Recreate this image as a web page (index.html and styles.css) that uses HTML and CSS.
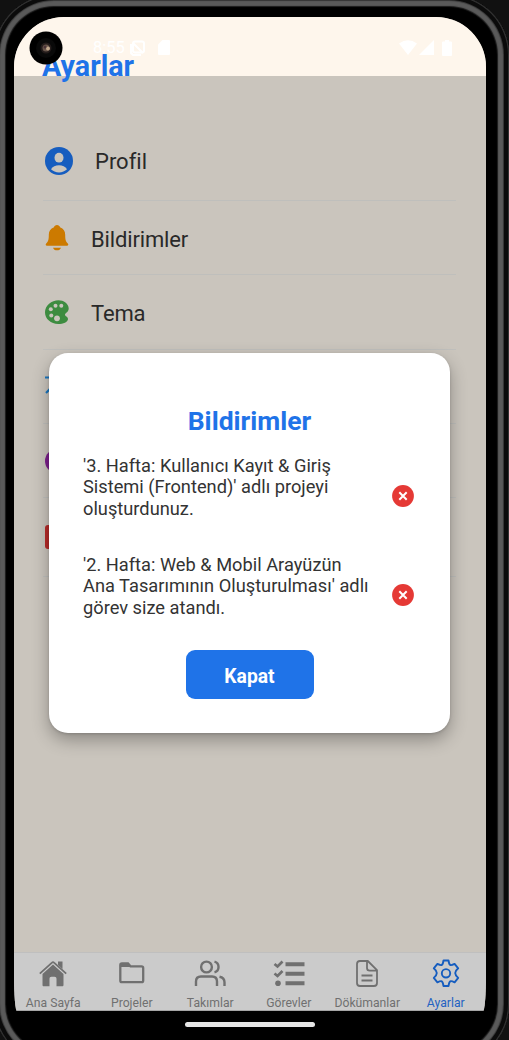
FILE: index.html
```
<!DOCTYPE html>
<html lang="tr">
<head>
<meta charset="utf-8">
<title>Ayarlar</title>
<link rel="stylesheet" href="styles.css">
</head>
<body>
<div class="device">
  <div class="bezel">
    <main class="screen">
      <header class="status">
        <div class="status-left">
          <span class="clock">8:55</span>
          <svg width="16" height="16" viewBox="0 0 16 16" fill="none" stroke="currentColor" stroke-width="2"><rect x="4" y="1.500" width="11" height="11" rx="2"/><path d="M2 4v9l2 2h8M4 3l10 10"/></svg>
          <svg class="sd" width="12" height="15" viewBox="0 0 12 15" fill="currentColor"><path d="M4.500 0H11a1 1 0 0 1 1 1v13a1 1 0 0 1-1 1H1a1 1 0 0 1-1-1V4.500z"/></svg>
        </div>
        <div class="status-right">
          <svg width="18" height="15" viewBox="0 0 18 15" fill="currentColor"><path d="M0 3.500Q9-3 18 3.500L9 15z"/></svg>
          <svg width="15" height="15" viewBox="0 0 15 15" fill="currentColor"><path d="M15 0v15H0z"/></svg>
          <svg class="battery" width="10" height="16" viewBox="0 0 10 16" fill="currentColor"><path d="M3 0h4v1.500h2a1 1 0 0 1 1 1V15a1 1 0 0 1-1 1H1a1 1 0 0 1-1-1V2.500a1 1 0 0 1 1-1h2z"/></svg>
        </div>
      </header>
      <h1 class="title">Ayarlar</h1>
      <ul class="settings">
        <li class="row row-profile">
          <svg width="28" height="28" viewBox="0 0 28 28"><circle cx="14" cy="14" r="14" fill="#165dbf"/><ellipse cx="14" cy="10.700" rx="4.500" ry="4.900" fill="#cac5bd"/><path d="M6 22.200c1.500-2.500 4.600-4 8-4s6.500 1.500 8 4c-2 2-4.900 3.200-8 3.200s-6-1.200-8-3.200z" fill="#cac5bd"/></svg>
          <span class="row-text">Profil</span>
        </li>
        <li class="row">
          <svg width="24" height="26" viewBox="0 0 24 26" fill="#cc7a00"><path d="M12 0c1.600 0 2.700 1 3 2.200 3.600 1.400 5.200 4 5.200 7.600 0 5 .6 6.800 2.600 8.600.9.900.6 2.300-.8 2.300H2c-1.400 0-1.700-1.400-.8-2.300 2-1.800 2.600-3.600 2.600-8.600 0-3.600 1.600-6.200 5.200-7.600C9.300 1 10.400 0 12 0zM8 22.700h8c-.5 1.600-2 2.600-4 2.600s-3.500-1-4-2.600z"/></svg>
          <span class="row-text">Bildirimler</span>
        </li>
        <li class="row">
          <svg width="24" height="24" viewBox="0 0 24 24"><path fill="#3d8c40" d="M13.500.2C6.500.2 0 5.500 0 12.300 0 19 6 24 13.200 24c5 0 9.800-2 9.800-5 0-2.500-3-2.500-3-4.500 0-1.500 3.700-2.200 3.700-6C23.700 3.600 18.500.2 13.500.2z"/><g fill="#cac5bd"><circle cx="10.500" cy="5.700" r="2"/><circle cx="16.300" cy="5.700" r="2"/><circle cx="5.800" cy="9.300" r="2"/><circle cx="6.300" cy="15.400" r="2"/><circle cx="12" cy="18.300" r="2.900"/></g></svg>
          <span class="row-text">Tema</span>
        </li>
        <li class="row">
          <svg width="24" height="24" viewBox="0 0 24 24" fill="none" stroke="#1a78c2" stroke-width="2.200"><path d="M-.5 3.500h16M8 1v3M1 19C6 14.500 10 10 11 3.500"/></svg>
        </li>
        <li class="row"><svg width="24" height="24"><circle cx="12" cy="12" r="12" fill="#7d1f8d"/></svg></li>
        <li class="row row-last"><svg width="24" height="24"><rect width="24" height="24" rx="3" fill="#b72b2a"/></svg></li>
      </ul>
      <nav class="tabs">
        <div class="tab tab-home"><svg width="28" height="28" viewBox="0 0 28 28"><path fill="#707070" d="M14 5.500 24.500 15v11c0 .8-.5 1.300-1.300 1.300h-5.700V20c0-1.500-.7-2.200-2-2.200h-3c-1.300 0-2 .7-2 2.200v7.300H4.800c-.8 0-1.300-.5-1.300-1.300V15z"/><path d="m.8 14.600 12.200-11q1-1 2 0l12.200 11" fill="none" stroke="#707070" stroke-width="1.800"/><path fill="#707070" d="M19 2.500h4.500V10L19 6z"/></svg><span>Ana Sayfa</span></div>
        <div class="tab"><svg width="28" height="28" viewBox="0 0 28 28"><path d="M4 4.500h6l2.500 2.800h11q1.700 0 1.700 1.700v12.500q0 1.700-1.700 1.700H4q-1.700 0-1.700-1.700V6.200Q2.300 4.500 4 4.500z" fill="none" stroke="#707070" stroke-width="2.300"/><path d="M2.500 4h8l3 4h-11z" fill="#707070"/></svg><span>Projeler</span></div>
        <div class="tab"><svg width="32" height="28" viewBox="0 0 32 28" fill="none" stroke="#707070" stroke-width="2.400"><circle cx="12.500" cy="8" r="5.400"/><path d="M2 27v-4.500q0-5 5-5h11q5 0 5 5V27M20.500 2.700a5.500 5.500 0 0 1 0 10.600M25.500 17.800q5 1 5 5.500V27"/></svg><span>Takımlar</span></div>
        <div class="tab"><svg width="32" height="28" viewBox="0 0 32 28" fill="none" stroke="#707070" stroke-width="4"><path stroke-linejoin="round" d="M12.500 5.200h19M12.500 14.700h19M12.500 24.200h19"/><path stroke-width="2.700" d="m1.500 5 3 2.500 5-5M1.500 14.500l3 2.500 5-5"/><circle cx="5" cy="24.200" r="2.800" fill="#707070" stroke="none"/></svg><span>Görevler</span></div>
        <div class="tab"><svg width="28" height="28" viewBox="0 0 28 28" fill="none" stroke="#707070" stroke-width="1.800" stroke-linejoin="round"><path d="M7 2h7.800l9.200 9.200V24q0 3-3 3H7q-3 0-3-3V5q0-3 3-3zM14 2v7q0 2.700 2.700 2.700H24M8.500 16.500h11M8.500 21.500h11"/></svg><span>Dökümanlar</span></div>
        <div class="tab active"><svg width="28" height="28" viewBox="0 0 28 28" fill="none" stroke="#165dbf" stroke-width="1.900" stroke-linejoin="round"><path d="M11.500 1.500h5q.6 3.800 1.700 4.400t4.400-1l3.600 4.400q-3 2.600-3 4.700t3 4.900l-3.600 4.400q-3.300-1.600-4.400-1t-1.700 4.700h-5q-.6-4.100-1.700-4.700t-4.400 1l-3.600-4.400q3-2.800 3-4.900t-3-4.700l3.600-4.400q3.300 1.600 4.400 1t1.700-4.400z"/><circle cx="14" cy="14.300" r="4.200"/></svg><span>Ayarlar</span></div>
      </nav>
      <section class="modal">
        <h2>Bildirimler</h2>
        <div class="notice"><p>'3. Hafta: Kullanıcı Kayıt &amp; Giriş<br>Sistemi (Frontend)' adlı projeyi<br>oluşturdunuz.</p><svg width="22" height="22" viewBox="0 0 22 22"><circle cx="11" cy="11" r="10.900" fill="#e53935"/><path d="m7.300 7.300 7.400 7.400m0-7.400-7.400 7.400" stroke="#fff" stroke-width="2"/></svg></div>
        <div class="notice"><p>'2. Hafta: Web &amp; Mobil Arayüzün<br>Ana Tasarımının Oluşturulması' adlı<br>görev size atandı.</p><svg width="22" height="22" viewBox="0 0 22 22"><circle cx="11" cy="11" r="10.900" fill="#e53935"/><path d="m7.300 7.300 7.400 7.400m0-7.400-7.400 7.400" stroke="#fff" stroke-width="2"/></svg></div>
        <button class="close">Kapat</button>
      </section>
    </main>
    <div class="home-bar"></div>
    <svg class="camera" width="34" height="34" viewBox="0 0 34 34"><circle cx="17" cy="17" r="16.500" fill="#000"/><circle cx="17" cy="17" r="10" fill="#090909"/><circle cx="17" cy="17" r="5.500" fill="#241c1b"/><circle cx="17" cy="17" r="3.500" fill="#69564b"/><circle cx="19" cy="17.500" r="2" fill="#c2a88c"/><circle cx="16" cy="16" r="1.500" fill="#4b3438"/></svg>
  </div>
</div>
</body>
</html>
```
FILE: styles.css
```
* { box-sizing: border-box; }
body { margin: 0; background: #111; font-family: Roboto, sans-serif; overflow: hidden; }
h1, h2, p, ul { margin: 0; padding: 0; }
ul { list-style: none; }
svg { display: block; flex: none; }
.device { width: 509px; height: 1040px; overflow: hidden; }
.bezel {
  position: relative; width: 515px; height: 1069px; margin: -5px 0 0 -6px; padding: 22px 23px 0 20px;
  border-radius: 60px; background: #000;
  box-shadow: inset 0 0 0 1px #333, inset 0 0 0 5px #0b0b0b, inset 0 0 1px 6px #333, inset 0 0 1px 11px #5a5a5a, inset 0 0 1px 12px #1c1c1c;
}
.screen {
  position: relative; width: 472px; height: 994px; overflow: hidden;
  display: flex; flex-direction: column; background: #cac5bd;
  border-radius: 50px 50px 3px 3px / 50px 50px 36px 36px;
}
.status {
  height: 59px; flex: none; display: flex; justify-content: space-between; padding: 23px 34px 0 79px;
  background: #fef6ec; color: #fff;
}
.status-left, .status-right { display: flex; align-items: flex-start; }
.clock { font-size: 16.500px; line-height: 15px; width: 36px; white-space: nowrap; }
.sd { margin-left: 13px; }
.status-right { gap: 2px; }
.battery { margin-left: 6px; }
.title { position: relative; margin: -26px 0 0 28px; height: 34px; font-size: 28.700px; line-height: 33px; color: #1f73e8; }
.settings { margin: 40px 30px 0 29px; }
.row { height: 74.300px; display: flex; align-items: center; gap: 22px; padding-left: 2px; border-bottom: 1px solid #bfbfbc; }
.row-profile { height: 77px; padding-bottom: 2px; }
.row-last { height: 79px; }
.row-text { font-size: 22px; color: #292929; }
.row:not(.row-profile) .row-text { letter-spacing: -.15px; padding-top: 3px; }
.tabs { margin-top: auto; height: 59px; display: flex; padding-right: 1px; background: #cbcbcb; border-top: 1px solid #bfbfbf; border-bottom: 1px solid #a5a5a5; }
.tab { flex: 1; display: flex; flex-direction: column; align-items: center; padding-top: 6px; gap: 9px; font-size: 12.200px; line-height: 15px; color: #707070; white-space: nowrap; }
.active { color: #2462c2; }
.modal {
  position: absolute; left: 35px; top: 336.400px; width: 401px; height: 380px; padding: 52px 34px 34px;
  display: flex; flex-direction: column; align-items: center;
  background: #fff; border-radius: 19px; box-shadow: 0 7px 17px rgba(0,0,0,.3), 0 1px 3px rgba(0,0,0,.15);
}
.modal h2 { font-size: 26.500px; line-height: 32px; color: #1f73e8; }
.notice { width: 100%; display: flex; justify-content: space-between; height: 65px; margin-top: 17.500px; font-size: 18.250px; line-height: 21.500px; color: #333; padding-right: 2px; white-space: nowrap; }
.notice + .notice { margin-top: 34px; }
.notice svg { margin-top: 30px; }
.close { width: 128px; height: 49px; margin-top: auto; padding: 3px 6px 0; border: 0; border-radius: 9px; background: #1f73e8; color: #fff; font: 700 19.300px Roboto, sans-serif; }
.home-bar { width: 130px; height: 5px; border-radius: 3px; background: #e6e6e6; margin: 11px 0 0 171px; }
.camera { position: absolute; left: 35px; top: 36px; }
```
